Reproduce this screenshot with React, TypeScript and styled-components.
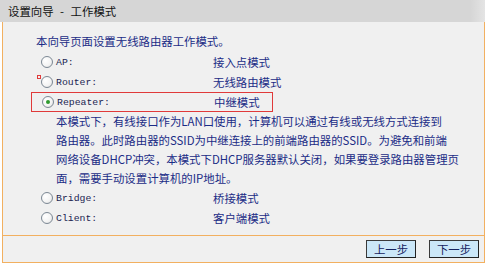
import React from 'react';
import styled, { createGlobalStyle } from 'styled-components';

const GlobalStyle = createGlobalStyle`
  html, body {
    margin: 0;
    padding: 0;
    background: #ffffff;
  }
  body {
    font-family: "Noto Sans CJK SC", sans-serif;
  }
`;

const Frame = styled.div`
  width: 485px;
  display: flex;
  flex-direction: column;
`;

const TitleBar = styled.div`
  height: 22px;
  padding-left: 8px;
  display: flex;
  align-items: center;
  background: linear-gradient(to right, #d6d6d6 0%, #d6d6d6 97%, #e4e4e4 100%);
  color: #111;
  font-size: 11.4px;
  word-spacing: 4px;
  white-space: nowrap;
`;

const Panel = styled.div`
  margin-left: 2px;
  border: 1px solid #f2b060;
  border-top: none;
  background: #f0f0f0;
  display: flex;
  flex-direction: column;
`;

const Main = styled.div`
  padding: 9px 0 7px 0;
  display: flex;
  flex-direction: column;
  color: #1b2c86;
  font-size: 11.4px;
`;

const Intro = styled.div`
  height: 20px;
  line-height: 20px;
  padding-left: 33px;
  margin-bottom: 1px;
  white-space: nowrap;
`;

const Row = styled.div<{ $boxed?: boolean }>`
  position: relative;
  height: 20px;
  display: flex;
  align-items: center;
  margin-left: ${p => (p.$boxed ? '28px' : '0')};
  width: ${p => (p.$boxed ? '242px' : 'auto')};
  padding-left: ${p => (p.$boxed ? '10px' : '38px')};
  box-sizing: border-box;
  border: ${p => (p.$boxed ? '1px solid #e03a3a' : 'none')};
`;

const Radio = styled.span<{ $checked?: boolean }>`
  width: 10px;
  height: 10px;
  border-radius: 50%;
  border: 1px solid #7c8894;
  background: radial-gradient(circle at 35% 35%, #ffffff 0%, #f4f4f4 55%, #dcdcdc 100%);
  display: flex;
  align-items: center;
  justify-content: center;
  flex-shrink: 0;

  &::after {
    content: '';
    display: ${p => (p.$checked ? 'block' : 'none')};
    width: 4px;
    height: 4px;
    border-radius: 50%;
    background: #2f9a2f;
  }
`;

const Label = styled.span`
  width: 157px;
  padding-left: 3px;
  font-family: "Liberation Mono", monospace;
  font-size: 9.8px;
  color: #1a2450;
  white-space: nowrap;
`;

const Desc = styled.span`
  white-space: nowrap;
`;

const Marker = styled.span`
  position: absolute;
  left: 34px;
  top: 3px;
  width: 2px;
  height: 2px;
  border: 1px solid #e03a3a;
`;

const Paragraph = styled.div`
  padding-left: 53px;
  line-height: 19px;
  white-space: nowrap;
`;

const Footer = styled.div`
  border-top: 1px solid #f2b060;
  height: 26px;
  display: flex;
  align-items: center;
  justify-content: flex-end;
  gap: 13px;
  padding-right: 5px;
`;

const StepButton = styled.button`
  width: 50px;
  height: 18px;
  padding: 0;
  border: 1px solid #3a3a3a;
  border-right-color: #222;
  border-bottom-color: #222;
  background: #cbe7f8;
  color: #14215e;
  font-family: "Noto Sans CJK SC", sans-serif;
  font-size: 11.4px;
  line-height: 16px;
`;

const modes = [
  { key: 'ap', label: 'AP:', desc: '接入点模式' },
  { key: 'router', label: 'Router:', desc: '无线路由模式', marker: true },
  { key: 'repeater', label: 'Repeater:', desc: '中继模式', checked: true },
];

const moreModes = [
  { key: 'bridge', label: 'Bridge:', desc: '桥接模式' },
  { key: 'client', label: 'Client:', desc: '客户端模式' },
];

const help = [
  '本模式下，有线接口作为LAN口使用，计算机可以通过有线或无线方式连接到',
  '路由器。此时路由器的SSID为中继连接上的前端路由器的SSID。为避免和前端',
  '网络设备DHCP冲突，本模式下DHCP服务器默认关闭，如果要登录路由器管理页',
  '面，需要手动设置计算机的IP地址。',
];

function ModeRow(props: { label: string, desc: string, checked?: boolean, marker?: boolean }) {
  const { label, desc, checked, marker } = props;
  return (
    <Row $boxed={checked}>
      {marker && <Marker />}
      <Radio $checked={checked} />
      <Label>{label}</Label>
      <Desc>{desc}</Desc>
    </Row>
  );
}

export default function App() {
  return (
    <>
      <GlobalStyle />
      <Frame>
        <TitleBar>设置向导 - 工作模式</TitleBar>
        <Panel>
          <Main>
            <Intro>本向导页面设置无线路由器工作模式。</Intro>
            {modes.map(m => (
              <ModeRow key={m.key} label={m.label} desc={m.desc} checked={m.checked} marker={m.marker} />
            ))}
            <Paragraph>
              {help.map((line, i) => (
                <div key={i}>{line}</div>
              ))}
            </Paragraph>
            {moreModes.map(m => (
              <ModeRow key={m.key} label={m.label} desc={m.desc} />
            ))}
          </Main>
          <Footer>
            <StepButton>上一步</StepButton>
            <StepButton>下一步</StepButton>
          </Footer>
        </Panel>
      </Frame>
    </>
  );
}
